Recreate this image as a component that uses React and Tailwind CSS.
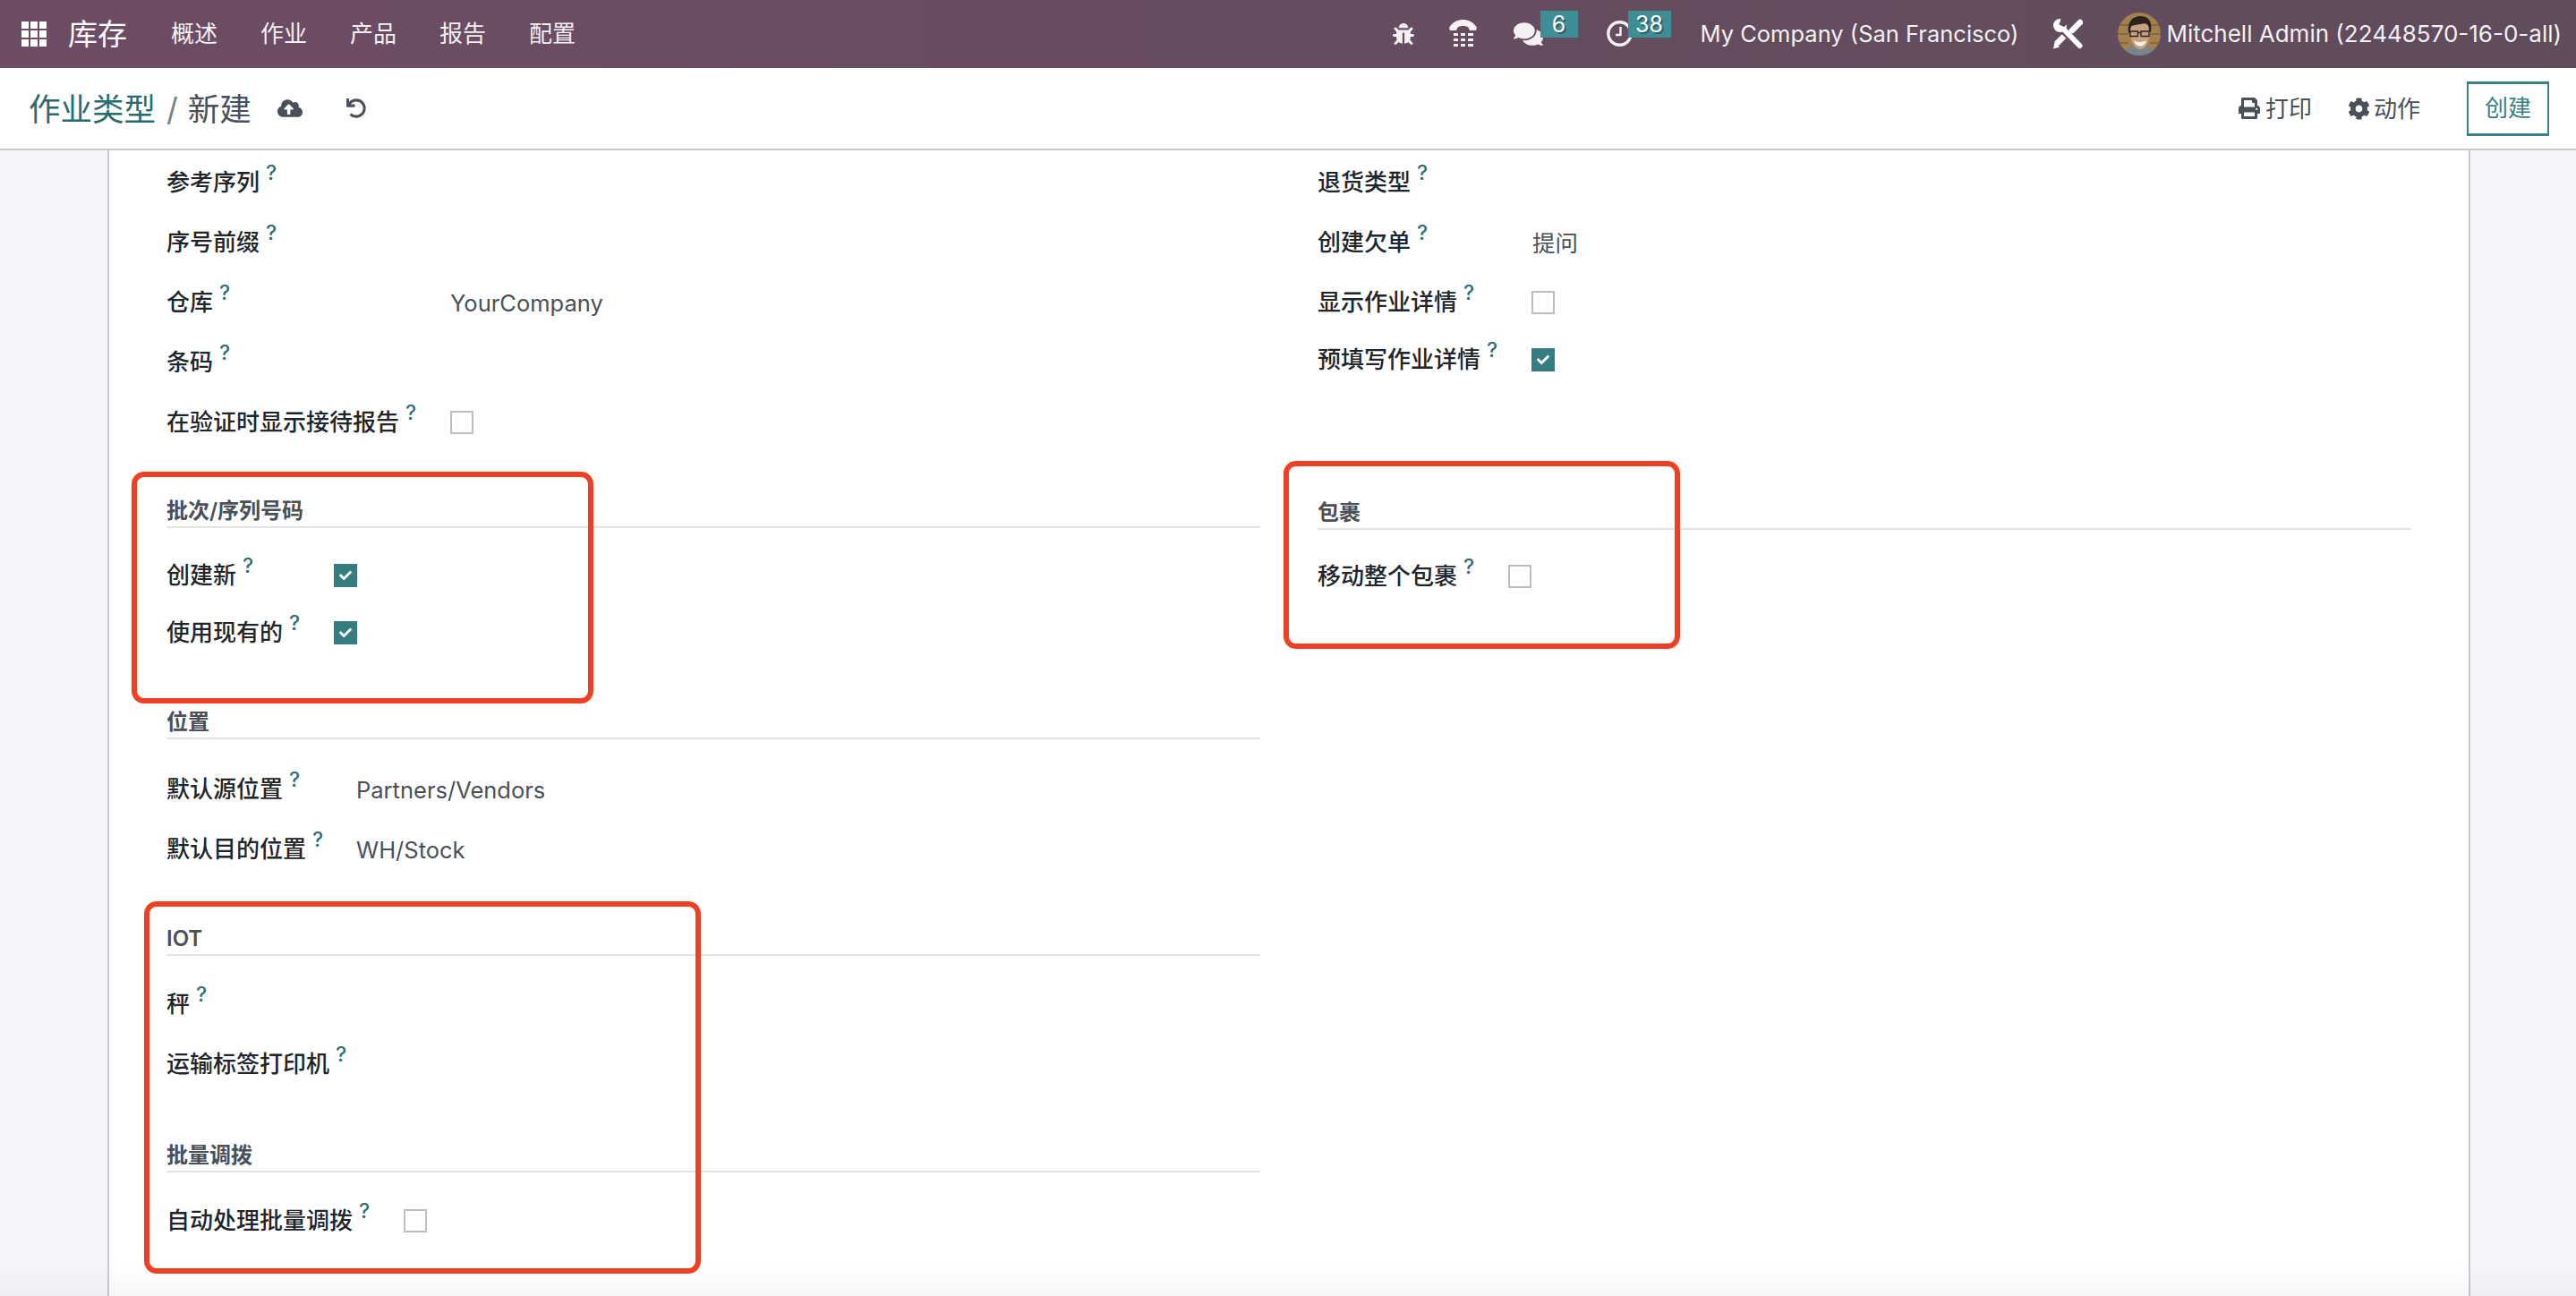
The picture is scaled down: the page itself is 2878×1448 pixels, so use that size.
import React from "react";
import { FaBug, FaComments, FaCloudUploadAlt, FaUndo, FaPrint, FaCog, FaCheck } from "react-icons/fa";

const font = "[font-family:'Inter','Noto_Sans_CJK_SC',sans-serif]";

function Check({ on }) {
  return on ? (
    <span className="flex h-[26px] w-[26px] shrink-0 items-center justify-center bg-[#367d82] text-white">
      <FaCheck className="h-[14px] w-[14px]" />
    </span>
  ) : (
    <span className="block h-[26px] w-[26px] shrink-0 border-2 border-[#bdbdbd] bg-white" />
  );
}

function Row({ label, width, h = "h-[67px]", children }) {
  return (
    <div className={`flex items-center ${h}`}>
      <div className={`${width} shrink-0 whitespace-nowrap text-[26px] leading-[32px] font-medium text-[#212529]`}>
        {label}
        <sup className="relative -top-[12px] ml-[7px] align-baseline text-[23px] font-medium text-[#2d6f73]">?</sup>
      </div>
      {children}
    </div>
  );
}

function Val({ children }) {
  return <span className="mt-[2px] text-[25.500px] leading-[32px] whitespace-nowrap text-[#495057]">{children}</span>;
}

function Section({ title, mt }) {
  return (
    <div className={`${mt} flex h-[40px] items-end border-b-2 border-[#e3e4e6] pb-[3px] text-[24px] leading-[28px] font-semibold text-[#495057]`}>
      {title}
    </div>
  );
}

function Phone() {
  return (
    <svg viewBox="0 0 31 31" fill="currentColor" className="h-[31px] w-[31px]">
      <path d="M0 9C4 2 10 0 15.5 0S27 2 31 9L30 12H23L21 8C18 6.5 13 6.5 10 8L8 12H1Z" />
      <path d="M5 15h5v3H5zM13 15h5v3h-5zM21 15h6v3h-6zM5 21h5v3H5zM13 21h5v3h-5zM21 21h6v3h-6zM5 27h5v3H5zM13 27h5v3h-5zM21 27h6v3h-6z" />
    </svg>
  );
}

function Clock() {
  return (
    <svg viewBox="0 0 29 29" fill="none" stroke="currentColor" className="h-[29px] w-[29px]">
      <circle cx="14.5" cy="14.5" r="12.7" strokeWidth="3.4" />
      <path d="M15.5 7v9H10" strokeWidth="2.4" />
    </svg>
  );
}

function Tools() {
  return (
    <svg viewBox="0 0 33 34" className="h-[34px] w-[33px]">
      <path d="M30 4 21 13" stroke="#fff" strokeWidth="6.5" strokeLinecap="round" />
      <path d="M12 19.5 3.5 28" stroke="#fff" strokeWidth="6.5" />
      <path d="M0 33.5 1.5 26 7 31.5Z" fill="#fff" />
      <path d="M10 10 29.5 30" stroke="#fff" strokeWidth="6" strokeLinecap="round" />
      <circle cx="7.5" cy="7.5" r="7.5" fill="#fff" />
      <path d="M6.5 6.5 9 -1h8v6l-5 4Z" fill="#5f4c5c" />
    </svg>
  );
}

function Avatar() {
  return (
    <svg viewBox="0 0 48 48" className="h-[48px] w-[48px] shrink-0 rounded-full">
      <rect width="48" height="48" fill="#a2814e" />
      <path d="M0 14h14M0 24h12M0 34h12M36 14h12M36 24h12M36 34h12" stroke="#7d6238" strokeWidth="1.5" />
      <path d="M6 48c1-8 9-11 18-11s17 3 18 11z" fill="#76868c" />
      <path d="M14 20c0 11 4 21 11 21s11-10 11-21-22-10-22 0z" fill="#c9a082" />
      <path d="M12 23c-2-13 5-19 13-19 9 0 14 5 12 18l-2-1c0-6-1-8-4-9-6 1-12 2-16 3-1 2-1 5-1 8z" fill="#2b2320" />
      <path d="M14 21h8.500v5.500H14zM26 21h9v5.500h-9zM22.500 22.500H26" fill="none" stroke="#2a2320" strokeWidth="1.3" />
      <path d="M18 31c3 2.500 10 2.500 14 0-1 5-4 6.500-7 6.500s-6-2-7-6.500z" fill="#f3ece6" />
    </svg>
  );
}

export default function App() {
  return (
    <div className={`relative flex h-screen flex-col overflow-hidden bg-[#f5f6fa] ${font}`}>
      <header className="flex h-[76px] shrink-0 items-center bg-gradient-to-r from-[#6d4c65] to-[#5f4c5c] text-white">
        <div className="ml-[24px] grid h-[28px] w-[28px] grid-cols-3 gap-[2px]">
          {[0, 1, 2, 3, 4, 5, 6, 7, 8].map((i) => (
            <span key={i} className="block bg-white" />
          ))}
        </div>
        <span className="ml-[24px] w-[67px] text-[33px] leading-none">库存</span>
        <nav className="ml-[48px] flex gap-[48px] text-[26px] leading-none text-[#f3eff2]">
          <span>概述</span>
          <span>作业</span>
          <span>产品</span>
          <span>报告</span>
          <span>配置</span>
        </nav>
        <div className="ml-auto flex items-center text-[#f4f0f3]">
          <FaBug className="h-[24px] w-[24px]" />
          <div className="ml-[39px] -translate-y-[1px]"><Phone /></div>
          <div className="relative ml-[41px] h-[30px] w-[33px]">
            <FaComments className="h-[30px] w-[33px]" />
            <span className="absolute -top-[11px] left-[30px] flex h-[30px] w-[42px] items-center justify-center bg-[#3f8e95] text-[25px] leading-none text-white [text-shadow:2px_2px_0_#2a5f66]">6</span>
          </div>
          <div className="relative ml-[71px] h-[30px] w-[29px]">
            <Clock />
            <span className="absolute -top-[11px] left-[24px] flex h-[30px] w-[48px] items-center justify-center bg-[#3f8e95] text-[25px] leading-none text-white [text-shadow:2px_2px_0_#2a5f66]">38</span>
          </div>
          <span className="ml-[76px] text-[25.500px] leading-none whitespace-nowrap">My Company (San Francisco)</span>
          <div className="ml-[39px]"><Tools /></div>
          <div className="ml-[39px]"><Avatar /></div>
          <span className="mr-[16px] ml-[6px] text-[26px] leading-none whitespace-nowrap">Mitchell Admin (22448570-16-0-all)</span>
        </div>
      </header>

      <div className="flex h-[92px] shrink-0 items-center border-b-2 border-[#c9c8ce] bg-white">
        <div className="mt-[3px] ml-[32px] flex items-center text-[35.500px] leading-none whitespace-nowrap">
          <span className="text-[#2a6b6e]">作业类型</span>
          <span className="ml-[12px] text-[#7b7f86]">/</span>
          <span className="ml-[11px] text-[#4a4f59]">新建</span>
          <FaCloudUploadAlt className="ml-[29px] h-[24px] w-[28px] -translate-y-[2px] text-[#4a4f59]" />
          <FaUndo className="ml-[49px] h-[22px] w-[22px] -translate-y-[2px] text-[#4a4f59]" />
        </div>
        <div className="mr-[30px] ml-auto flex items-center text-[26px] leading-none text-[#495057]">
          <FaPrint className="h-[24px] w-[24px]" />
          <span className="mt-[2px] ml-[6px]">打印</span>
          <FaCog className="ml-[40px] h-[25px] w-[25px]" />
          <span className="mt-[2px] ml-[4px]">动作</span>
          <span className="ml-[52px] flex h-[61px] w-[92px] items-center justify-center border-2 border-t-[3px] border-b-[3px] border-[#3a8087] text-[#3b7f85]">创建</span>
        </div>
      </div>

      <main className="mr-[118px] ml-[120px] flex-1 border-x-2 border-[#c9c8ce] bg-white">
        <div className="grid grid-cols-2 gap-x-16 px-16 pt-[2px]">
          <div>
            <Row label="参考序列" width="w-[317px]" />
            <Row label="序号前缀" width="w-[317px]" />
            <Row label="仓库" width="w-[317px]"><Val>YourCompany</Val></Row>
            <Row label="条码" width="w-[317px]" />
            <Row label="在验证时显示接待报告" width="w-[317px]"><Check /></Row>
            <Section title="批次/序列号码" mt="mt-[45px]" />
            <div className="mt-[21px]">
              <Row label="创建新" width="w-[187px]" h="h-[64px]"><Check on /></Row>
              <Row label="使用现有的" width="w-[187px]" h="h-[64px]"><Check on /></Row>
            </div>
            <Section title="位置" mt="mt-[47px]" />
            <div className="mt-[22px]">
              <Row label="默认源位置" width="w-[212px]"><Val>Partners/Vendors</Val></Row>
              <Row label="默认目的位置" width="w-[212px]"><Val>WH/Stock</Val></Row>
            </div>
            <Section title="IOT" mt="mt-[46px]" />
            <div className="mt-[20px]">
              <Row label="秤" width="w-[212px]" />
              <Row label="运输标签打印机" width="w-[300px]" />
            </div>
            <Section title="批量调拨" mt="mt-[48px]" />
            <div className="mt-[20px]">
              <Row label="自动处理批量调拨" width="w-[265px]"><Check /></Row>
            </div>
          </div>
          <div>
            <Row label="退货类型" width="w-[240px]" />
            <Row label="创建欠单" width="w-[240px]"><Val>提问</Val></Row>
            <Row label="显示作业详情" width="w-[239px]"><Check /></Row>
            <Row label="预填写作业详情" width="w-[239px]" h="h-[62px]"><Check on /></Row>
            <Section title="包裹" mt="mt-[119px]" />
            <div className="mt-[20px]">
              <Row label="移动整个包裹" width="w-[213px]" h="h-[64px]"><Check /></Row>
            </div>
          </div>
        </div>
      </main>

      <div className="pointer-events-none absolute inset-x-0 bottom-0 h-[36px] bg-gradient-to-b from-transparent to-[#00000008]" />
      <div className="absolute top-[527px] left-[147px] h-[259px] w-[516px] rounded-[14px] border-[6px] border-[#ee4124]" />
      <div className="absolute top-[515px] left-[1434px] h-[210px] w-[443px] rounded-[14px] border-[6px] border-[#ee4124]" />
      <div className="absolute top-[1007px] left-[161px] h-[416px] w-[622px] rounded-[14px] border-[6px] border-[#ee4124]" />
    </div>
  );
}
